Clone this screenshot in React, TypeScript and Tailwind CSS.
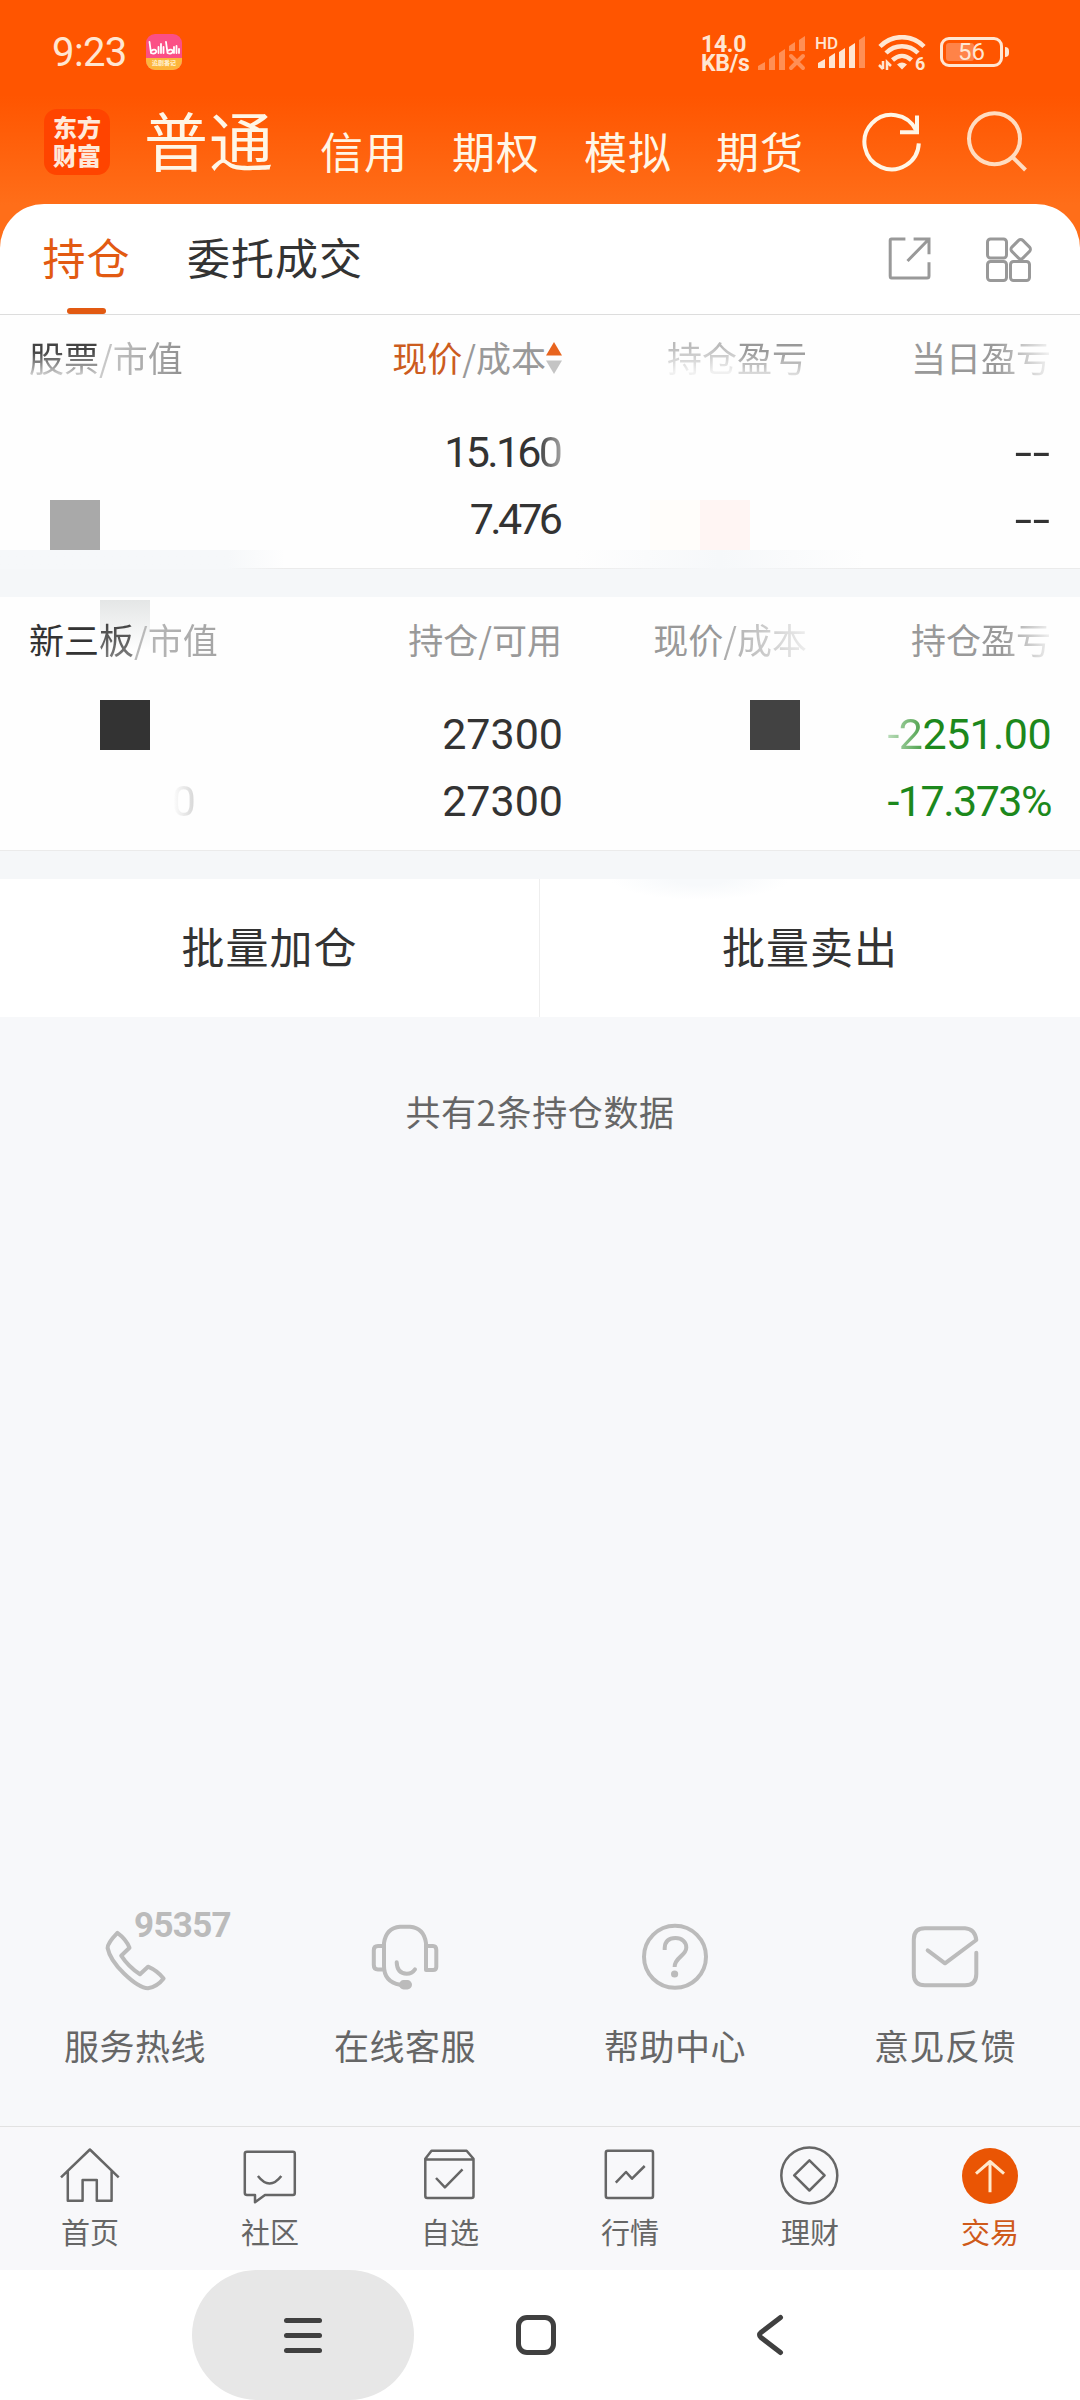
import type { ReactNode } from 'react';

const markets = ['信用', '期权', '模拟', '期货'];

function StatusBar() {
  return (
    <div className="flex h-[96px] items-start font-['Roboto','Noto_Sans_CJK_SC',sans-serif] text-[#ffe6d2]">
      <div className="ml-[52px] mt-[31px] w-[94px] text-[40px] leading-[44px] tracking-[-0.600px]">9:23</div>
      <div className="mt-[34px] flex h-[36px] w-[36px] flex-col items-center overflow-hidden rounded-[9px] bg-[#fb4f86]">
        <svg viewBox="0 0 36 24" className="h-[24px] w-[36px] shrink-0" fill="none" stroke="#fff" strokeWidth="1.8" strokeLinecap="round">
          <path d="M3.500 8l1.500 11c4 2 6-1 5-2.500s-3-1-4 0M12.500 13v6M15 10v9M17.500 13v6M20 8l1.500 11c4 2 6-1 5-2.500s-3-1-4 0M28 13v6M30.500 12v7M33 15v4" />
        </svg>
        <div className="h-[12px] w-full bg-[#fdb53c] text-center text-[6px] font-bold leading-[10px] text-[#fff3d6]">
          追剧番记
        </div>
      </div>
      <div className="ml-[519px] mt-[35px] w-[56px] text-[23px] font-bold leading-[19px] tracking-[-0.3px]">
        <div>14.0</div>
        <div>KB/s</div>
      </div>
      <svg viewBox="0 0 50 36" className="mt-[35px] h-[36px] w-[50px]" fill="#ff8f55">
        <path d="M1 35v-4l7-4v8zM12 35V24l6-4v15zM22 35V18l6-4v21zM32 16v-5l6-4v9zM42 16V5l6-4v15z" />
        <path d="M34 21l12 12M46 21L34 33" stroke="#ff8f55" strokeWidth="4" strokeLinecap="round" />
      </svg>
      <div className="relative ml-[10px] mt-[35px] h-[36px] w-[50px]">
        <svg viewBox="0 0 50 36" className="h-[36px] w-[50px]" fill="#ffe6d2">
          <path d="M1 33v-5l7-4v9zM12 33V22l6-4v15zM22 33V17l6-4v20zM32 33V12l6-4v25z" />
          <path d="M42 33V5l6-4v32z" fill="#ff8f55" />
        </svg>
        <span className="absolute left-[-2px] top-[-1px] text-[17px] font-medium leading-[18px]">HD</span>
      </div>
      <div className="relative ml-[11px] mt-[35px] h-[36px] w-[50px]">
        <svg viewBox="0 0 50 36" className="h-[36px] w-[50px]" fill="none" stroke="#ffe6d2" strokeWidth="4.500">
          <path d="M2 11.500C14-1 34-1 46 11.500M8 18c9-9 23-9 32 0M14.500 25c6-5.500 13-5.500 19 0" />
          <path d="M24 34.500l-5-5q5-4 10 0z" fill="#ffe6d2" stroke="none" />
          <path d="M5 26v8M1 30l4 4M9 35v-8l4 4" strokeWidth="2.500" />
        </svg>
        <span className="absolute left-[37px] top-[20px] text-[18px] font-bold leading-[18px]">6</span>
      </div>
      <div className="ml-[12px] mt-[37px] flex items-center">
        <div className="relative h-[30px] w-[63px] rounded-[9px] border-3 border-[#ffe6d2] p-[3px]">
          <div className="h-full w-[28px] rounded-[3px] bg-[#ff8348]" />
          <span className="absolute inset-0 text-center text-[24px] leading-[25px]">56</span>
        </div>
        <div className="ml-[2px] h-[10px] w-[4px] rounded-r-full bg-[#ffe6d2]" />
      </div>
    </div>
  );
}

function Header() {
  return (
    <div className="flex h-[108px] items-start text-[#fff6e6]">
      <div className="ml-[44px] mt-[13px] h-[66px] w-[66px] rounded-[13px] bg-[#ff4400] pt-[4px] text-center text-[24px] font-black leading-[28px] text-[#ffe9da]">
        <div>东方</div>
        <div>财富</div>
      </div>
      <div className="ml-[34px] mt-[7px] w-[176px] text-[64px] leading-[70px] tracking-[1px]">普通</div>
      <div className="mt-[30px] flex gap-[44px] text-[43px] leading-[48px] tracking-[1px]">
        {markets.map((m) => (
          <span key={m} className="w-[88px] whitespace-nowrap">{m}</span>
        ))}
      </div>
      <svg viewBox="0 0 60 60" className="ml-[58px] mt-[16px] h-[60px] w-[60px]" fill="none" stroke="currentColor" strokeWidth="4">
        <path d="M56.800 31.300A27.200 27.200 0 1 1 54 18" />
        <path d="M55 3.500V20.300H38" />
      </svg>
      <svg viewBox="0 0 62 62" className="ml-[44px] mt-[14px] h-[62px] w-[62px]" fill="none" stroke="#ffdcc0" strokeWidth="4">
        <circle cx="28.500" cy="28.700" r="25.500" />
        <path d="M46 46.500L59.500 60" />
      </svg>
    </div>
  );
}

function Tabs() {
  return (
    <div className="flex h-[111px] items-start rounded-t-[44px] border-b border-[#dddddd] bg-white">
      <div className="ml-[42px] flex w-[89px] flex-col items-center whitespace-nowrap text-[#e25a12]">
        <span className="mt-[25px] text-[43px] leading-[54px] tracking-[1px]">持仓</span>
        <span className="mt-[25px] h-[6px] w-[39px] rounded-full bg-[#e25a12]" />
      </div>
      <div className="ml-[56px] mt-[25px] text-[43px] leading-[54px] tracking-[1px] text-[#333333]">委托成交</div>
      <svg viewBox="0 0 44 44" className="ml-auto mt-[32px] h-[44px] w-[44px]" fill="none" stroke="#999999" strokeWidth="3">
        <path d="M17.400 3H3.500Q2.200 3 2.200 4.500V40Q2.200 42 3.500 42H39Q41 42 41 40V26.300M25.600 3H41V18.300M40.500 3.500L19.500 25" />
      </svg>
      <svg viewBox="0 0 48 48" className="ml-[53px] mr-[47px] mt-[32px] h-[48px] w-[48px]" fill="none" stroke="#999999" strokeWidth="3">
        <rect x="2.500" y="3" width="19" height="19" rx="3" />
        <rect x="2.500" y="25.500" width="19" height="19" rx="3" />
        <rect x="25.500" y="25.500" width="19" height="19" rx="3" />
        <rect x="28" y="5.500" width="15.500" height="15.500" rx="3" transform="rotate(45 35.700 13.200)" />
      </svg>
    </div>
  );
}

function HeadRow({ children }: { children: ReactNode }) {
  return (
    <div className="grid grid-cols-[289px_244px_245px_244px] px-[29px] text-[35px] leading-[50px] whitespace-nowrap text-[#999999]">
      {children}
    </div>
  );
}

function ValueRow({ children }: { children: ReactNode }) {
  return (
    <div className="grid h-[67px] grid-cols-[289px_244px_245px_244px] px-[29px] text-right font-['Roboto',sans-serif] text-[43px] leading-[67px] whitespace-nowrap text-[#333333]">
      {children}
    </div>
  );
}

function NoValue() {
  return (
    <span>
      <span className="inline-block origin-right scale-x-145 tracking-[0.500px]">--</span>
    </span>
  );
}

function Stocks() {
  return (
    <section className="relative h-[254px] border-b border-[#ebebeb] bg-[#fefefe] pt-[17px]">
      <HeadRow>
        <span>
          <span className="bg-linear-to-b from-[#444444] from-40% to-[#dddddd] to-90% bg-clip-text text-transparent">股票</span>
          <span className="bg-linear-to-r from-[#cccccc] to-[#909090] bg-clip-text text-transparent">/市值</span>
        </span>
        <span className="flex items-center justify-end">
          <span className="text-[#cc5c1e]">现价</span>/成本
          <svg viewBox="0 0 16 32" className="mt-[2px] h-[32px] w-[16px]">
            <path d="M0 13.500L8 0l8 13.500z" fill="#e8641e" />
            <path d="M0 18.500h16L8 32z" fill="#c4c4c4" />
          </svg>
        </span>
        <span className="text-right">
          <span className="bg-linear-to-b from-[#bbbbbb] from-30% to-[#f0f0f0] to-80% bg-clip-text text-transparent">持仓</span>
          <span className="bg-linear-to-b from-[#999999] from-40% to-[#e4e4e4] to-90% bg-clip-text text-transparent">盈亏</span>
        </span>
        <span className="text-right">
          当日<span className="bg-linear-to-r from-[#999999] from-20% to-[#f4f4f4] bg-clip-text text-transparent">盈亏</span>
        </span>
      </HeadRow>
      <div className="h-[37px]" />
      <ValueRow>
        <span />
        <span className="mr-[-1px] tracking-[-2.700px]">
          15.16<span className="bg-linear-to-r from-[#444444] to-[#aaaaaa] bg-clip-text tracking-normal text-transparent">0</span>
        </span>
        <span />
        <NoValue />
      </ValueRow>
      <ValueRow>
        <span />
        <span className="mr-[-1px] tracking-[-3.700px]">7.47<span className="tracking-normal">6</span></span>
        <span />
        <NoValue />
      </ValueRow>
      <span className="absolute left-[50px] top-[185px] h-[50px] w-[50px] bg-[#a9a9a9]" />
      <span className="absolute left-[650px] top-[185px] h-[50px] w-[50px] bg-[#fffdfa]" />
      <span className="absolute left-[700px] top-[185px] h-[50px] w-[50px] bg-[#fff5f3]" />
      <span className="absolute left-0 top-[235px] h-[19px] w-[285px] bg-linear-to-r from-[#f6f8fa] from-80% to-[#f6f8fa00]" />
      <span className="absolute left-[575px] top-[235px] h-[19px] w-[290px] bg-linear-to-r from-[#f6f8fa00] via-[#f6f8fa] to-[#f6f8fa00]" />
    </section>
  );
}

function NewBoard() {
  return (
    <section className="relative h-[254px] border-b border-[#ebebeb] bg-[#fefefe] pt-[17px]">
      <span className="absolute left-[100px] top-[3px] h-[50px] w-[50px] bg-linear-to-b from-[#e4e6e6] to-[#fefefe]" />
      <div className="relative">
        <HeadRow>
          <span>
            <span className="text-[#333333]">新三</span>
            <span className="bg-linear-to-b from-[#333333] to-[#888888] bg-clip-text text-transparent">板</span>
            <span className="bg-linear-to-r from-[#bbbbbb] to-[#a4a4a4] bg-clip-text text-transparent">/市值</span>
          </span>
          <span className="text-right">持仓/可用</span>
          <span className="text-right">
            现价<span className="bg-linear-to-r from-[#aaaaaa] to-[#eeeeee] bg-clip-text text-transparent">/成本</span>
          </span>
          <span className="text-right">
            持仓<span className="bg-linear-to-r from-[#999999] from-30% to-[#f2f2f2] bg-clip-text text-transparent">盈亏</span>
          </span>
        </HeadRow>
      </div>
      <div className="h-[37px]" />
      <ValueRow>
        <span />
        <span className="mr-[-1px]">27300</span>
        <span />
        <span className="tracking-[-0.600px] text-[#1c881c]">
          <span className="bg-linear-to-r from-[#b9dcb9] to-[#4ea34e] bg-clip-text text-transparent">-2</span>251.00
        </span>
      </ValueRow>
      <ValueRow>
        <span className="pr-[122px]">
          <span className="bg-linear-to-r from-white to-[#d4d4d4] bg-clip-text text-transparent">0</span>
        </span>
        <span className="mr-[-1px]">27300</span>
        <span />
        <span className="tracking-[-1.500px] text-[#1c881c]">-17.373%</span>
      </ValueRow>
      <span className="absolute left-[100px] top-[103px] h-[50px] w-[50px] bg-[#333333]" />
      <span className="absolute left-[750px] top-[103px] h-[50px] w-[50px] bg-[#424242]" />
    </section>
  );
}

function BatchActions() {
  return (
    <div className="relative grid h-[138px] grid-cols-2 bg-white text-center text-[43px] leading-[132px] tracking-[1px] text-[#333333]">
      <div className="border-r border-[#eeeeee]">批量加仓</div>
      <div>批量卖出</div>
      <span className="absolute left-[610px] top-0 h-[21px] w-[180px] bg-[radial-gradient(ellipse_at_top,#f7f9fb_20%,#ffffff_70%)]" />
    </div>
  );
}

function SupportItem({ label, children }: { label: string; children: ReactNode }) {
  return (
    <div className="relative flex flex-col items-center">
      <svg viewBox="0 0 66 66" className="h-[66px] w-[66px] overflow-visible" fill="none" stroke="#bbbbbb" strokeWidth="4" strokeLinecap="round" strokeLinejoin="round">
        {children}
      </svg>
      <span className="mt-[31px] text-[35px] leading-[48px] tracking-[0.500px] text-[#666666]">{label}</span>
    </div>
  );
}

function Support() {
  return (
    <div className="mt-[789px] grid h-[202px] grid-cols-4">
      <div className="relative">
        <SupportItem label="服务热线">
          <path d="M15.400 8.800Q24 15 27.500 23.700L19.200 31.700Q26.500 43 38 50.300L46 42.700Q55 46.500 61.600 54.500Q55 63 46 64.200Q37 64 22 49.500Q8 36 5.600 24Q5.500 19 15.400 8.800Z" />
        </SupportItem>
        <span className="absolute left-[134px] top-[-16px] font-['Roboto',sans-serif] text-[35px] font-bold leading-[36px] tracking-[-0.700px] text-[#bbbbbb]">
          95357
        </span>
      </div>
      <SupportItem label="在线客服">
        <path d="M28 60.700Q12 58 12 42V19Q14 4 28 2.700H38Q52 4 54 19V46H61Q64.300 46 64.300 43V26Q64.300 22 61 22H54M12 22H6Q1.800 22 1.800 26V41Q1.800 45.500 6 45.500H12M24.700 38.300Q25 49.700 34.700 49.700Q40 49.700 43 45.300" />
        <rect x="29" y="58" width="9" height="5.500" rx="2.700" fill="#bbbbbb" />
      </SupportItem>
      <SupportItem label="帮助中心">
        <circle cx="33" cy="32.800" r="31" />
        <path strokeLinecap="butt" d="M22.700 26V24C23 17 27 14 33.500 14C40 14 44.300 18 44.300 23.500C44.300 32 32.600 33 32.600 43" />
        <circle cx="32.600" cy="50" r="3.600" fill="#bbbbbb" stroke="none" />
      </SupportItem>
      <SupportItem label="意见反馈">
        <path d="M64.300 28.700V50Q64.300 61.300 53 61.300H13Q1.800 61.300 1.800 50V15.500Q1.800 4.300 13 4.300H53Q63 5 64.300 16L33 39.300L15.700 26.300" />
      </SupportItem>
    </div>
  );
}

const tabs: { label: string; icon: ReactNode }[] = [
  {
    label: '首页',
    icon: <path d="M1 31.300L29.900 3.500L58.700 31.300M7.800 25V54.700H22.600V34H36.800V54.700H51.600V25" />,
  },
  {
    label: '社区',
    icon: (
      <path d="M7 5.700H53Q54.800 5.700 54.800 7.500V47Q54.800 49 53 49H25L15 56.300V49H7Q4.800 49 4.800 47V7.500Q4.800 5.700 7 5.700ZM17.900 30Q29.600 45 41.300 30" />
    ),
  },
  {
    label: '自选',
    icon: <path d="M5.300 12.700L11.500 4.700H46.600L53.500 12.700V50Q53.500 52 51.500 52H7.300Q5.300 52 5.300 50ZM5.300 13.500H53.500M16 32L24.900 41.300L42.500 23.300" />,
  },
  {
    label: '行情',
    icon: (
      <>
        <rect x="5.800" y="4.700" width="47.200" height="47.300" rx="2" />
        <path d="M15.800 36.700L26 26L32 32.700L44.700 20" />
      </>
    ),
  },
  {
    label: '理财',
    icon: (
      <>
        <circle cx="29.300" cy="29.400" r="28" />
        <path d="M29.400 14.300L44.600 29.400L29.400 44.500L14.200 29.400Z" />
      </>
    ),
  },
  {
    label: '交易',
    icon: (
      <>
        <circle cx="30" cy="30" r="28" fill="#ea5504" stroke="none" />
        <path d="M30 46.300V15.500M16 27.700L30 15.500L44 27.700" stroke="#ffe9cc" strokeWidth="3" />
      </>
    ),
  },
];

function TabBar() {
  return (
    <div className="grid h-[144px] grid-cols-6 border-t border-[#e2e2e2] bg-[#f8f8fa] pt-[19px]">
      {tabs.map((tab) => (
        <div key={tab.label} className="flex flex-col items-center">
          <svg viewBox="0 0 60 60" className="h-[60px] w-[60px]" fill="none" stroke="#666666" strokeWidth="2.500" strokeLinejoin="round">
            {tab.icon}
          </svg>
          <span className={`mt-[5px] text-[29px] leading-[40px] ${tab.label === '交易' ? 'text-[#cf5a1a]' : 'text-[#666666]'}`}>
            {tab.label}
          </span>
        </div>
      ))}
    </div>
  );
}

function SystemNav() {
  return (
    <div className="flex h-[130px] items-center bg-white">
      <div className="ml-[192px] flex h-[130px] w-[222px] flex-col items-center justify-center gap-[10px] rounded-[65px] bg-[#e7e7e7]">
        <i className="h-[5px] w-[38px] rounded-full bg-[#404040]" />
        <i className="h-[5px] w-[38px] rounded-full bg-[#404040]" />
        <i className="h-[5px] w-[38px] rounded-full bg-[#404040]" />
      </div>
      <div className="ml-[102px] h-[40px] w-[40px] rounded-[11px] border-5 border-[#404040]" />
      <svg viewBox="0 0 28 42" className="ml-[200px] h-[42px] w-[28px]" fill="none" stroke="#404040" strokeWidth="5" strokeLinecap="round">
        <path d="M24.500 3.500L5 18.500Q2 21 5 23.500L24.500 38.500" />
      </svg>
    </div>
  );
}

export default function App() {
  return (
    <div className="h-[2400px] w-[1080px] overflow-hidden bg-[#f7f8fa] font-['Noto_Sans_CJK_SC',sans-serif]">
      <div className="bg-[linear-gradient(to_bottom,#ff5500_95px,#ff6e19_205px)]">
        <StatusBar />
        <Header />
        <Tabs />
      </div>
      <Stocks />
      <div className="h-[28px] bg-[#f5f7f9]" />
      <NewBoard />
      <div className="h-[28px] bg-[#f5f7f9]" />
      <BatchActions />
      <p className="mt-[70px] text-center text-[35px] leading-[48px] tracking-[0.600px] text-[#666666]">共有2条持仓数据</p>
      <Support />
      <TabBar />
      <SystemNav />
    </div>
  );
}
